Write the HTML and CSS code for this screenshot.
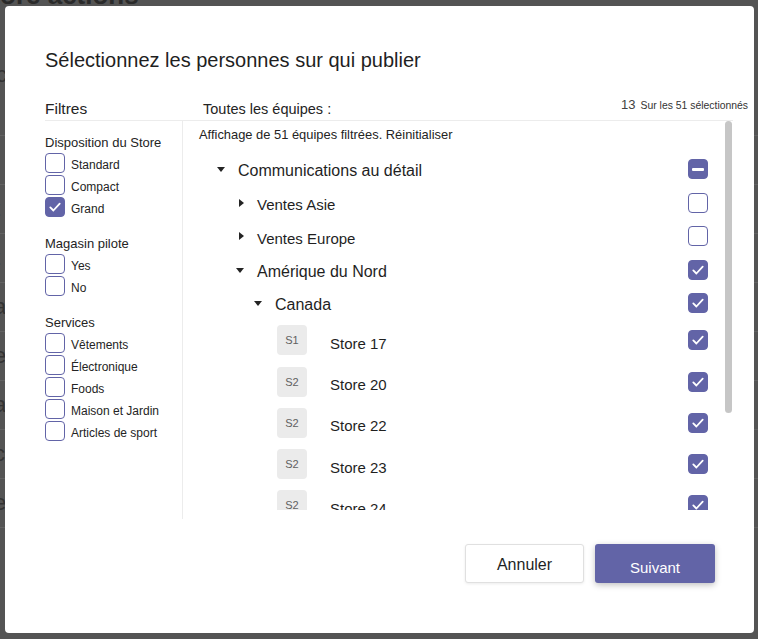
FILE: index.html
```html
<!DOCTYPE html>
<html lang="fr">
<head>
<meta charset="utf-8">
<title>Sélectionnez les personnes sur qui publier</title>
<link rel="stylesheet" href="styles.css">
</head>
<body>
<div class="page">
  <h1 class="page-title">Store actions</h1>
  <div class="page-intro">c</div>
  <div class="page-list">
    <div class="page-row"><span>l</span></div>
    <div class="page-row"><span>t</span></div>
    <div class="page-row"><span>t</span></div>
    <div class="page-row"><span>a</span></div>
    <div class="page-row"><span>e</span></div>
    <div class="page-row"><span>a</span></div>
    <div class="page-row"><span>c</span></div>
    <div class="page-row"><span>e</span></div>
    <div class="page-row"><span>i</span></div>
  </div>
</div>

<div class="modal">
  <h2 class="modal-title">Sélectionnez les personnes sur qui publier</h2>

  <div class="picker-header">
    <div class="filters-title">Filtres</div>
    <div class="teams-title">Toutes les équipes :</div>
    <div class="counter"><span class="counter-num">13</span><span class="counter-text">Sur les 51 sélectionnés</span></div>
  </div>

  <div class="picker-body">
    <div class="filters">
      <div class="filter-group">
        <div class="filter-heading">Disposition du Store</div>
        <div class="filter-options">
          <div class="filter-option"><span class="cb"></span><span class="filter-label">Standard</span></div>
          <div class="filter-option"><span class="cb"></span><span class="filter-label">Compact</span></div>
          <div class="filter-option"><span class="cb checked"><svg viewBox="0 0 20 20" width="20" height="20"><path d="M5.3 10.4l3.1 3.1 6.3-6.9" fill="none" stroke="#fff" stroke-width="1.8" stroke-linecap="round" stroke-linejoin="round"/></svg></span><span class="filter-label">Grand</span></div>
        </div>
      </div>
      <div class="filter-group">
        <div class="filter-heading">Magasin pilote</div>
        <div class="filter-options">
          <div class="filter-option"><span class="cb"></span><span class="filter-label">Yes</span></div>
          <div class="filter-option"><span class="cb"></span><span class="filter-label">No</span></div>
        </div>
      </div>
      <div class="filter-group">
        <div class="filter-heading">Services</div>
        <div class="filter-options">
          <div class="filter-option"><span class="cb"></span><span class="filter-label">Vêtements</span></div>
          <div class="filter-option"><span class="cb"></span><span class="filter-label">Électronique</span></div>
          <div class="filter-option"><span class="cb"></span><span class="filter-label">Foods</span></div>
          <div class="filter-option"><span class="cb"></span><span class="filter-label">Maison et Jardin</span></div>
          <div class="filter-option"><span class="cb"></span><span class="filter-label">Articles de sport</span></div>
        </div>
      </div>
    </div>

    <div class="teams">
      <div class="scroll-area">
        <div class="result-note">Affichage de 51 équipes filtrées. Réinitialiser</div>
        <div class="tree">
          <div class="tree-row lvl0">
            <span class="caret"><span class="tri-down"></span></span>
            <span class="tree-label big">Communications au détail</span>
            <span class="cb checked tree-cb"><span class="dash"></span></span>
          </div>
          <div class="tree-row lvl1">
            <span class="caret"><span class="tri-right"></span></span>
            <span class="tree-label">Ventes Asie</span>
            <span class="cb tree-cb"></span>
          </div>
          <div class="tree-row lvl1">
            <span class="caret"><span class="tri-right"></span></span>
            <span class="tree-label">Ventes Europe</span>
            <span class="cb tree-cb"></span>
          </div>
          <div class="tree-row lvl1">
            <span class="caret"><span class="tri-down"></span></span>
            <span class="tree-label big">Amérique du Nord</span>
            <span class="cb checked tree-cb"><svg viewBox="0 0 20 20" width="20" height="20"><path d="M5.3 10.4l3.1 3.1 6.3-6.9" fill="none" stroke="#fff" stroke-width="1.8" stroke-linecap="round" stroke-linejoin="round"/></svg></span>
          </div>
          <div class="tree-row lvl2">
            <span class="caret"><span class="tri-down"></span></span>
            <span class="tree-label big">Canada</span>
            <span class="cb checked tree-cb"><svg viewBox="0 0 20 20" width="20" height="20"><path d="M5.3 10.4l3.1 3.1 6.3-6.9" fill="none" stroke="#fff" stroke-width="1.8" stroke-linecap="round" stroke-linejoin="round"/></svg></span>
          </div>
          <div class="tree-row store">
            <span class="avatar">S1</span>
            <span class="tree-label store-label">Store 17</span>
            <span class="cb checked tree-cb"><svg viewBox="0 0 20 20" width="20" height="20"><path d="M5.3 10.4l3.1 3.1 6.3-6.9" fill="none" stroke="#fff" stroke-width="1.8" stroke-linecap="round" stroke-linejoin="round"/></svg></span>
          </div>
          <div class="tree-row store">
            <span class="avatar">S2</span>
            <span class="tree-label store-label">Store 20</span>
            <span class="cb checked tree-cb"><svg viewBox="0 0 20 20" width="20" height="20"><path d="M5.3 10.4l3.1 3.1 6.3-6.9" fill="none" stroke="#fff" stroke-width="1.8" stroke-linecap="round" stroke-linejoin="round"/></svg></span>
          </div>
          <div class="tree-row store">
            <span class="avatar">S2</span>
            <span class="tree-label store-label">Store 22</span>
            <span class="cb checked tree-cb"><svg viewBox="0 0 20 20" width="20" height="20"><path d="M5.3 10.4l3.1 3.1 6.3-6.9" fill="none" stroke="#fff" stroke-width="1.8" stroke-linecap="round" stroke-linejoin="round"/></svg></span>
          </div>
          <div class="tree-row store">
            <span class="avatar">S2</span>
            <span class="tree-label store-label">Store 23</span>
            <span class="cb checked tree-cb"><svg viewBox="0 0 20 20" width="20" height="20"><path d="M5.3 10.4l3.1 3.1 6.3-6.9" fill="none" stroke="#fff" stroke-width="1.8" stroke-linecap="round" stroke-linejoin="round"/></svg></span>
          </div>
          <div class="tree-row store">
            <span class="avatar">S2</span>
            <span class="tree-label store-label">Store 24</span>
            <span class="cb checked tree-cb"><svg viewBox="0 0 20 20" width="20" height="20"><path d="M5.3 10.4l3.1 3.1 6.3-6.9" fill="none" stroke="#fff" stroke-width="1.8" stroke-linecap="round" stroke-linejoin="round"/></svg></span>
          </div>
        </div>
      </div>
      <div class="scrollbar"><div class="thumb"></div></div>
    </div>
  </div>

  <div class="modal-footer">
    <button class="btn btn-secondary">Annuler</button>
    <button class="btn btn-primary">Suivant</button>
  </div>
</div>
</body>
</html>
```

FILE: styles.css
```css
html, body {
  margin: 0;
  padding: 0;
}

body {
  width: 758px;
  height: 639px;
  overflow: hidden;
  font-family: "Liberation Sans", Arial, sans-serif;
  color: #242424;
  background: #545454;
}

/* dimmed page behind the dialog */
.page {
  width: 758px;
  height: 639px;
  overflow: hidden;
  background: #545454;
  color: #2e2e2e;
}

.page-title {
  margin: -18px 0 0 -26px;
  font-size: 26px;
  line-height: 26px;
  font-weight: bold;
  color: #2a2a2a;
}

.page-intro {
  margin: 55px 0 0 -4px;
  font-size: 22px;
  line-height: 24px;
  color: #333;
}

.page-list {
  margin-top: 48px;
}

.page-row {
  height: 48px;
  border-top: 1px solid #626262;
  display: flex;
  align-items: center;
  font-size: 22px;
  color: #333;
}

.page-row span {
  margin-left: -6px;
}

/* dialog */
.modal {
  position: absolute;
  left: 5px;
  top: 6px;
  width: 749px;
  height: 627px;
  box-sizing: border-box;
  padding: 42px 0 0 40px;
  background: #fff;
  border-radius: 4px;
  display: flex;
  flex-direction: column;
}

.modal-title {
  margin: 0;
  font-size: 20px;
  line-height: 24px;
  font-weight: normal;
  color: #1f1f1f;
}

.picker-header {
  margin-top: 28px;
  margin-right: 6px;
  height: 20px;
  display: flex;
}

.filters-title {
  width: 138px;
  font-size: 15.5px;
  line-height: 18px;
}

.teams-title {
  flex: 1;
  padding-left: 20px;
  font-size: 14.5px;
  line-height: 18px;
}

.counter {
  display: flex;
  align-items: baseline;
  margin-top: -1px;
  line-height: 12px;
  color: #333;
}

.counter-num {
  font-size: 13px;
  color: #424242;
}

.counter-text {
  margin-left: 5px;
  font-size: 10.4px;
}

.picker-body {
  width: 688px;
  height: 399px;
  box-sizing: border-box;
  border-top: 1px solid #ececec;
  display: flex;
}

.filters {
  width: 138px;
  flex: none;
  box-sizing: border-box;
  border-right: 1px solid #ececec;
  padding-top: 12px;
}

.filter-group + .filter-group {
  margin-top: 17px;
}

.filter-heading {
  font-size: 13px;
  line-height: 20px;
}

.filter-options {
  display: flex;
  flex-direction: column;
  gap: 2px;
}

.filter-option {
  height: 20px;
  display: flex;
  align-items: center;
}

.filter-label {
  margin-left: 6px;
  padding-top: 3px;
  font-size: 12px;
}

.cb {
  width: 20px;
  height: 20px;
  flex: none;
  box-sizing: border-box;
  border: 1px solid #6264a7;
  border-radius: 4px;
  background: #fff;
  display: flex;
  align-items: center;
  justify-content: center;
}

.cb.checked {
  background: #6264a7;
  border-color: #6264a7;
}

.cb svg {
  display: block;
  flex: none;
}

.dash {
  width: 12px;
  height: 3px;
  border-radius: 1px;
  background: #fff;
}

.teams {
  flex: 1;
  display: flex;
}

.scroll-area {
  flex: 1;
  height: 389px;
  overflow: hidden;
  box-sizing: border-box;
  padding: 6px 17px 0 16px;
}

.result-note {
  font-size: 12.9px;
  line-height: 16px;
}

.tree {
  margin-top: 9.25px;
}

.tree-row {
  height: 33.5px;
  display: flex;
  align-items: center;
}

.tree-row.lvl0 { padding-left: 18px; }
.tree-row.lvl1 { padding-left: 37px; }
.tree-row.lvl2 { padding-left: 55px; }

.tree-row.store {
  height: 41.25px;
  padding-left: 78px;
}

.caret {
  width: 21px;
  flex: none;
  display: flex;
  align-items: center;
}

.tri-down {
  width: 0;
  height: 0;
  margin-top: 1px;
  border-left: 4px solid transparent;
  border-right: 4px solid transparent;
  border-top: 5px solid #242424;
}

.tri-right {
  width: 0;
  height: 0;
  margin-left: 3px;
  border-top: 4.5px solid transparent;
  border-bottom: 4.5px solid transparent;
  border-left: 5px solid #242424;
}

.tree-label {
  padding-top: 4px;
  font-size: 15px;
  color: #1f1f1f;
}

.tree-label.big {
  font-size: 16px;
}

.store-label {
  margin-left: 23px;
  padding-top: 6px;
}

.tree-cb {
  margin-left: auto;
}

.avatar {
  width: 30px;
  height: 30px;
  flex: none;
  border-radius: 4px;
  background: #ebebeb;
  color: #616161;
  font-size: 11px;
  display: flex;
  align-items: center;
  justify-content: center;
}

.scrollbar {
  width: 7px;
  margin-right: 1px;
  flex: none;
}

.thumb {
  height: 292px;
  border-radius: 4px;
  background: #c6c6c6;
}

.modal-footer {
  margin-top: 25px;
  margin-right: 39px;
  display: flex;
  justify-content: flex-end;
  gap: 11px;
}

.btn {
  height: 39px;
  margin: 0;
  padding: 0;
  box-sizing: border-box;
  border-radius: 3px;
  font-family: "Liberation Sans", Arial, sans-serif;
  display: flex;
  align-items: center;
  justify-content: center;
  cursor: pointer;
}

.btn-secondary {
  width: 119px;
  padding-top: 2px;
  background: #fff;
  border: 1px solid #e0e0e0;
  box-shadow: 0 1px 3px rgba(0, 0, 0, 0.08);
  color: #1f1f1f;
  font-size: 16px;
}

.btn-primary {
  width: 120px;
  padding-top: 8px;
  background: #6264a7;
  border: none;
  box-shadow: 0 2px 6px rgba(0, 0, 0, 0.25);
  color: #fff;
  font-size: 15px;
}
```
